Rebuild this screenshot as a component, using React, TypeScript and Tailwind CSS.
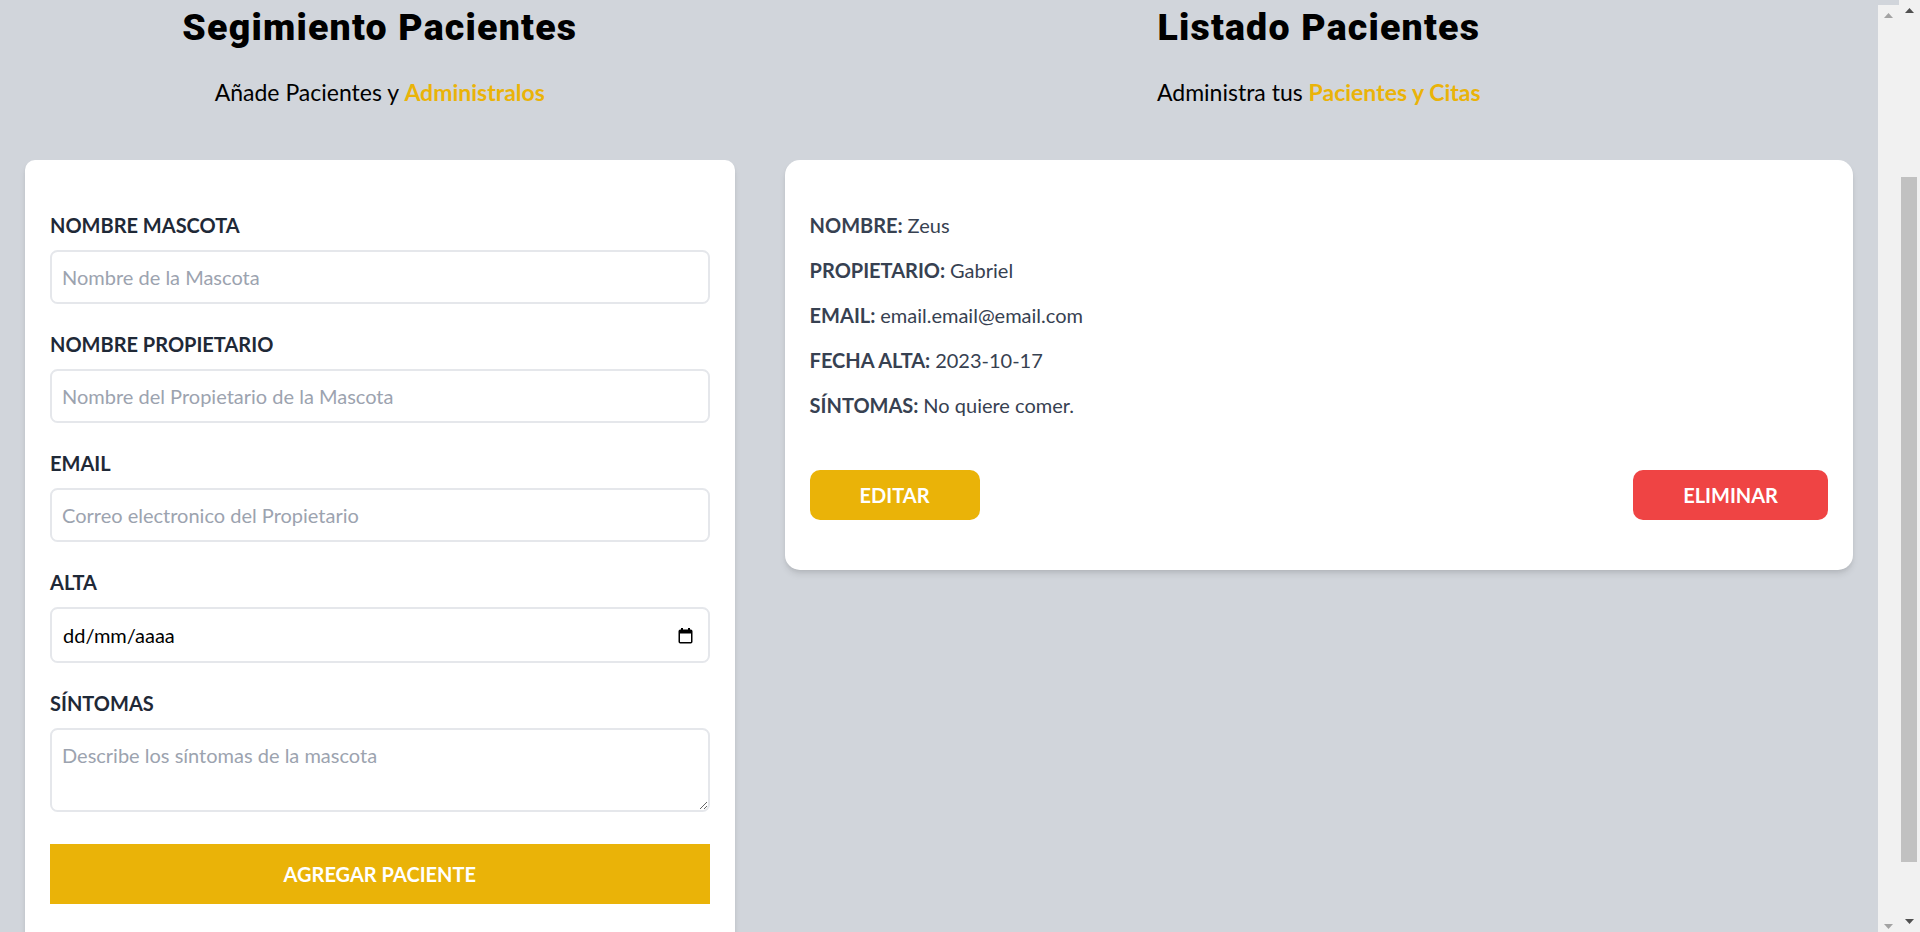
import { useState } from "react";

type Paciente = {
  id: string;
  nombre: string;
  propietario: string;
  email: string;
  fecha: string;
  sintomas: string;
};

const PACIENTES: Paciente[] = [
  {
    id: "1",
    nombre: "Zeus",
    propietario: "Gabriel",
    email: "email.email@email.com",
    fecha: "2023-10-17",
    sintomas: "No quiere comer.",
  },
];

const labelCls = "block text-[20px] leading-[30px] text-[#1f2937] uppercase font-bold";
const fieldCls =
  "border-2 border-[#e5e7eb] w-full p-[10px] mt-[10px] text-[20px] leading-[30px] rounded-[7.5px] placeholder:text-[#9ca3af] bg-white outline-none";
const titleCls =
  "font-black text-[37.5px] leading-[45px] tracking-[1.2px] text-center text-black font-['Roboto','Lato',sans-serif]";
const subCls = "text-[23px] leading-[35px] mt-[25px] mb-[50px] text-center text-black";
const shadowCls = "shadow-[0_5px_7.5px_-1.25px_rgba(0,0,0,0.1),0_2.5px_5px_-2.5px_rgba(0,0,0,0.1)]";

function CalendarIcon() {
  return (
    <svg width="15" height="17" viewBox="0 0 15 17" fill="none">
      <rect x="1.25" y="3.25" width="12.5" height="12.5" rx="1" stroke="#000" strokeWidth="1.5" />
      <rect x="1" y="3" width="13" height="3.5" fill="#000" />
      <rect x="3" y="1" width="2" height="3" fill="#000" />
      <rect x="10" y="1" width="2" height="3" fill="#000" />
    </svg>
  );
}

function Arrow({ up, dark }: { up: boolean; dark: boolean }) {
  return (
    <div className="h-[21px] flex items-center justify-center">
      <svg width="9" height="5" viewBox="0 0 9 5">
        <polygon points={up ? "0,5 4.5,0 9,5" : "0,0 4.5,5 9,0"} fill={dark ? "#505050" : "#a3a3a3"} />
      </svg>
    </div>
  );
}

function Formulario() {
  const [nombre, setNombre] = useState("");
  const [propietario, setPropietario] = useState("");
  const [email, setEmail] = useState("");
  const [sintomas, setSintomas] = useState("");

  return (
    <div className="w-2/5">
      <h2 className={titleCls}>Segimiento Pacientes</h2>
      <p className={subCls}>
        Añade Pacientes y <span className="text-[#eab308] font-bold">Administralos</span>
      </p>

      <form
        onSubmit={(e) => e.preventDefault()}
        className={`mx-[25px] bg-white ${shadowCls} rounded-[10px] py-[50px] px-[25px] mb-[50px]`}
      >
        <div className="mb-[25px]">
          <label className={labelCls}>Nombre Mascota</label>
          <input
            type="text"
            placeholder="Nombre de la Mascota"
            className={`block ${fieldCls}`}
            value={nombre}
            onChange={(e) => setNombre(e.target.value)}
          />
        </div>

        <div className="mb-[25px]">
          <label className={labelCls}>Nombre Propietario</label>
          <input
            type="text"
            placeholder="Nombre del Propietario de la Mascota"
            className={`block ${fieldCls}`}
            value={propietario}
            onChange={(e) => setPropietario(e.target.value)}
          />
        </div>

        <div className="mb-[25px]">
          <label className={labelCls}>Email</label>
          <input
            type="email"
            placeholder="Correo electronico del Propietario"
            className={`block ${fieldCls}`}
            value={email}
            onChange={(e) => setEmail(e.target.value)}
          />
        </div>

        {/* fecha: se dibuja a mano para que salga en formato dd/mm/aaaa */}
        <div className="mb-[25px]">
          <label className={labelCls}>Alta</label>
          <div className="mt-[10px] h-[56px] border-2 border-[#e5e7eb] rounded-[7.5px] flex items-center justify-between pl-[11px] pr-[15px] bg-white">
            <span className="text-[20px] leading-[30px] text-black">dd/mm/aaaa</span>
            <CalendarIcon />
          </div>
        </div>

        <div className="mb-[25px] text-[20px] leading-[30px]">
          <label className={labelCls}>Síntomas</label>
          <textarea
            rows={2}
            placeholder="Describe los síntomas de la mascota"
            className={`${fieldCls} h-[84px] align-baseline`}
            value={sintomas}
            onChange={(e) => setSintomas(e.target.value)}
          />
        </div>

        <input
          type="submit"
          value="Agregar Paciente"
          className="bg-[#eab308] w-full p-[15px] text-[20px] leading-[30px] text-white uppercase font-bold cursor-pointer"
        />
      </form>
    </div>
  );
}

function ListadoPacientes() {
  return (
    <div className="w-3/5 h-[932px] flex">
      <div className="flex-1">
        <h2 className={titleCls}>Listado Pacientes</h2>
        <p className={subCls}>
          Administra tus <span className="text-[#eab308] font-bold">Pacientes y Citas</span>
        </p>

        {PACIENTES.map((p) => (
          <div
            key={p.id}
            className={`mx-[25px] bg-white ${shadowCls} px-[25px] py-[50px] rounded-[15px] text-[20px] leading-[30px] text-[#374151]`}
          >
            <p className="font-bold mb-[15px] uppercase">
              Nombre: <span className="font-normal normal-case">{p.nombre}</span>
            </p>
            <p className="font-bold mb-[15px] uppercase">
              Propietario: <span className="font-normal normal-case">{p.propietario}</span>
            </p>
            <p className="font-bold mb-[15px] uppercase">
              Email: <span className="font-normal normal-case">{p.email}</span>
            </p>
            <p className="font-bold mb-[15px] uppercase">
              Fecha Alta: <span className="font-normal normal-case">{p.fecha}</span>
            </p>
            <p className="font-bold uppercase">
              Síntomas: <span className="font-normal normal-case">{p.sintomas}</span>
            </p>

            <div className="flex justify-between mt-[50px]">
              <button className="py-[10px] px-[50px] bg-[#eab308] text-white font-bold uppercase rounded-[10px]">
                Editar
              </button>
              <button className="py-[10px] px-[50px] bg-[#ef4444] text-white font-bold uppercase rounded-[10px]">
                Eliminar
              </button>
            </div>
          </div>
        ))}
      </div>

      {/* barra de scroll de la columna */}
      <div className="w-[21px] bg-[#f1f1f1] flex flex-col justify-between">
        <Arrow up dark={false} />
        <Arrow up={false} dark={false} />
      </div>
    </div>
  );
}

export default function App() {
  return (
    <div className="flex h-[932px] overflow-hidden bg-[#d1d5db] font-['Lato','Noto_Sans',sans-serif]">
      <div className="flex-1 flex items-start pt-[5px]">
        <Formulario />
        <ListadoPacientes />
      </div>

      {/* barra de scroll de la pagina */}
      <div className="w-[21px] h-[932px] bg-[#f1f1f1] flex flex-col">
        <Arrow up dark />
        <div className="flex-1 pt-[156px] pb-[49px] pl-[2px] pr-[3px]">
          <div className="h-full bg-[#c1c1c1]" />
        </div>
        <Arrow up={false} dark />
      </div>
    </div>
  );
}
